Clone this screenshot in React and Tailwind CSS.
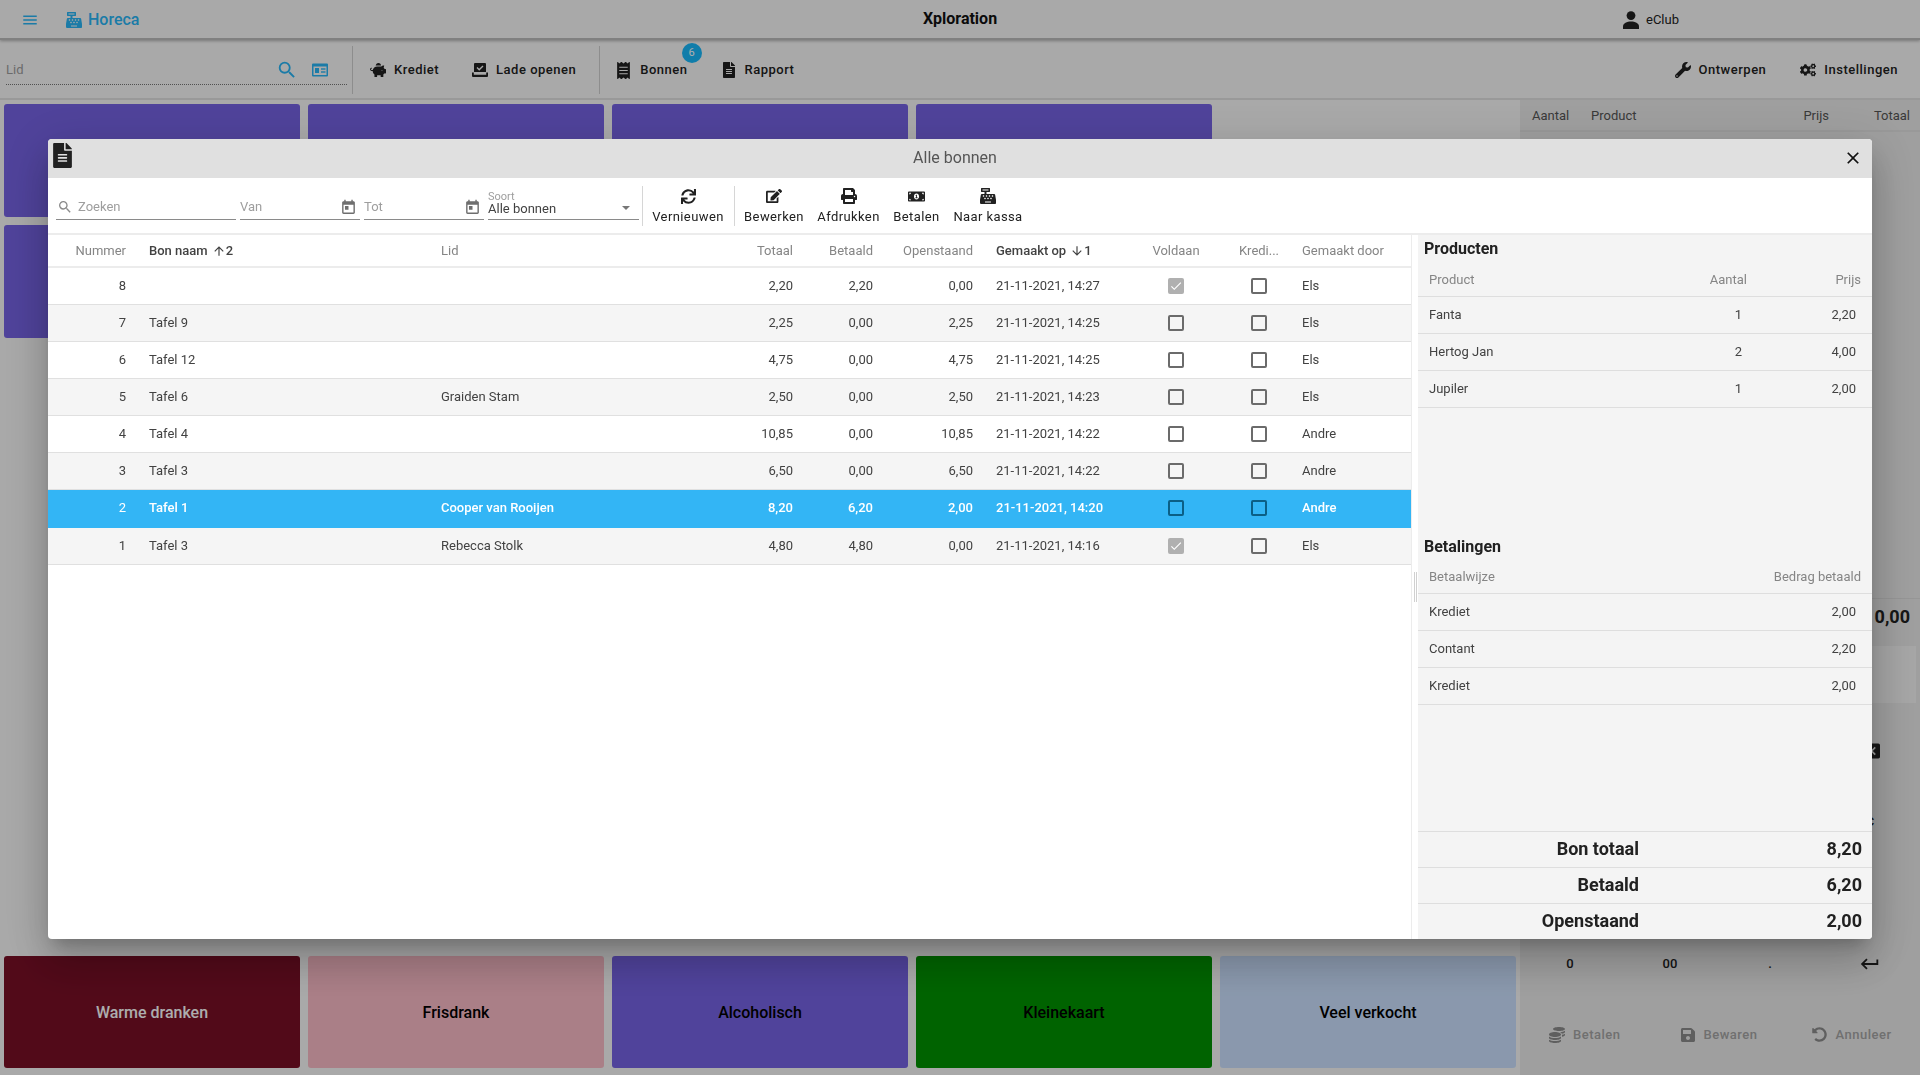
import React from 'react';
import { FaCashRegister, FaPiggyBank, FaFileAlt, FaWrench, FaCogs, FaSync, FaEdit, FaPrint, FaMoneyBillAlt, FaCoins, FaSave, FaUndoAlt, FaReceipt } from 'react-icons/fa';
import { MdMenu, MdSearch, MdToday, MdClose, MdCheck, MdKeyboardReturn, MdArrowUpward, MdArrowDownward, MdBackspace } from 'react-icons/md';

const BONNEN = [
    { nr: 8, naam: '', lid: '', totaal: '2,20', betaald: '2,20', open: '0,00', op: '21-11-2021, 14:27', voldaan: true, door: 'Els' },
    { nr: 7, naam: 'Tafel 9', lid: '', totaal: '2,25', betaald: '0,00', open: '2,25', op: '21-11-2021, 14:25', door: 'Els' },
    { nr: 6, naam: 'Tafel 12', lid: '', totaal: '4,75', betaald: '0,00', open: '4,75', op: '21-11-2021, 14:25', door: 'Els' },
    { nr: 5, naam: 'Tafel 6', lid: 'Graiden Stam', totaal: '2,50', betaald: '0,00', open: '2,50', op: '21-11-2021, 14:23', door: 'Els' },
    { nr: 4, naam: 'Tafel 4', lid: '', totaal: '10,85', betaald: '0,00', open: '10,85', op: '21-11-2021, 14:22', door: 'Andre' },
    { nr: 3, naam: 'Tafel 3', lid: '', totaal: '6,50', betaald: '0,00', open: '6,50', op: '21-11-2021, 14:22', door: 'Andre' },
    { nr: 2, naam: 'Tafel 1', lid: 'Cooper van Rooijen', totaal: '8,20', betaald: '6,20', open: '2,00', op: '21-11-2021, 14:20', door: 'Andre', selected: true },
    { nr: 1, naam: 'Tafel 3', lid: 'Rebecca Stolk', totaal: '4,80', betaald: '4,80', open: '0,00', op: '21-11-2021, 14:16', voldaan: true, door: 'Els' },
];

const PRODUCTEN = [
    { naam: 'Fanta', aantal: 1, prijs: '2,20' },
    { naam: 'Hertog Jan', aantal: 2, prijs: '4,00' },
    { naam: 'Jupiler', aantal: 1, prijs: '2,00' },
];

const BETALINGEN = [
    { wijze: 'Krediet', bedrag: '2,00' },
    { wijze: 'Contant', bedrag: '2,20' },
    { wijze: 'Krediet', bedrag: '2,00' },
];

const GRID_COLS = 'grid grid-cols-[93px_292px_302px_66px_80px_100px_147px_96px_70px_117px] items-center';

// Drawer with a check mark on a tray
const LadeIcon = ({ size = 16 }) => (
    <svg width={size} height={size} viewBox="0 0 16 16" fill="currentColor">
        <path d="M3 1h10a1 1 0 0 1 1 1v8H2V2a1 1 0 0 1 1-1z" />
        <path d="M5 5.6l2.2 2.1L11 4" fill="none" stroke="#fafafa" strokeWidth="1.4" />
        <path d="M0 10.5h1.8v2.3h12.4v-2.3H16V14a1 1 0 0 1-1 1H1a1 1 0 0 1-1-1z" />
    </svg>
);

const LidKaartIcon = ({ size = 16 }) => (
    <svg width={size} height={size} viewBox="0 0 16 16" fill="currentColor">
        <path fillRule="evenodd" d="M1 1.5h14a1 1 0 0 1 1 1v11a1 1 0 0 1-1 1H1a1 1 0 0 1-1-1v-11a1 1 0 0 1 1-1zM1.5 4.5v8.5h13V4.5z" />
        <rect x="3" y="6" width="4" height="5" />
        <rect x="9" y="6.3" width="4.5" height="1.4" />
        <rect x="9" y="9.3" width="4.5" height="1.4" />
    </svg>
);

const PersoonIcon = () => (
    <svg width="16" height="18" viewBox="0 0 16 18" fill="currentColor">
        <circle cx="8" cy="4.6" r="4.4" />
        <path d="M0 18v-2.6C0 12 4 10.4 8 10.4s8 1.6 8 5V18z" />
    </svg>
);

const ToolButton = ({ icon: Icon, size = 16, children }) => (
    <button className="flex items-center gap-2 text-[13px] font-medium tracking-[0.5px] text-[#212121]">
        <Icon size={size} />
        {children}
    </button>
);

const DialogAction = ({ icon: Icon, size = 16, className, children }) => (
    <button className={`flex flex-col items-center text-[13px] text-[#212121] tracking-[0.4px] ${className}`}>
        <span className="h-[20px] flex items-center justify-center"><Icon size={size} /></span>
        <span className="mt-[3px] leading-[16px]">{children}</span>
    </button>
);

const Checkbox = ({ checked, selected }) => (
    checked ? (
        <div className="w-4 h-4 rounded-[2px] bg-[#b0b0b0] flex items-center justify-center text-white"><MdCheck size={14} /></div>
    ) : (
        <div className={`w-4 h-4 rounded-[2px] border-2 ${selected ? 'border-[#0b5f86]' : 'border-[#6b6b6b]'}`} />
    )
);

const Field = ({ placeholder, icon: Icon, className }) => (
    <div className={`h-[25px] border-b border-[#8a8a8a] flex items-center justify-between pr-[3px] text-[13px] text-[#9e9e9e] ${className}`}>
        <span>{placeholder}</span>
        {Icon && <Icon size={17} className="text-[#6e6e6e]" />}
    </div>
);

const BonnenDialog = () => (
    <div className="fixed left-[48px] top-[139px] w-[1824px] h-[800px] rounded-[4px] overflow-hidden bg-white flex flex-col shadow-[0_11px_15px_-7px_rgba(0,0,0,0.2),0_24px_38px_3px_rgba(0,0,0,0.14),0_9px_46px_8px_rgba(0,0,0,0.12)]">
        {/* Title bar */}
        <div className="h-[39px] shrink-0 bg-[#e0e0e0] flex items-center pl-[2px] pb-[1px]">
            <FaFileAlt size={25} className="text-[#212121] mb-[5px]" />
            <span className="flex-1 text-center text-[16px] text-[#555] pr-[8px]">Alle bonnen</span>
            <MdClose size={20} className="text-[#111] mr-[9px]" />
        </div>

        {/* Toolbar */}
        <div className="h-[57px] shrink-0 border-b-2 border-[#ececec] flex items-center pl-[8px]">
            <div className="flex gap-[4px] self-start mt-[17px]">
                <div className="w-[180px] h-[25px] border-b border-[#8a8a8a] flex items-center gap-[5px] text-[13px] text-[#9e9e9e] pl-[1px]">
                    <MdSearch size={16} className="text-[#8a8a8a]" />
                    <span>Zoeken</span>
                </div>
                <Field placeholder="Van" icon={MdToday} className="w-[120px]" />
                <Field placeholder="Tot" icon={MdToday} className="w-[120px]" />
                <div className="w-[151px] h-[25px] border-b border-[#8a8a8a] flex items-end justify-between pr-[9px]">
                    <div className="flex flex-col text-[13px] leading-[14px] text-[#424242] pb-[3px]">
                        <span className="text-[11px] leading-[10px] text-[#9e9e9e]">Soort</span>
                        Alle bonnen
                    </div>
                    <span className="mb-[9px] border-x-[4px] border-t-[4px] border-x-transparent border-t-[#777]" />
                </div>
            </div>
            <div className="w-px h-[40px] bg-[#d6d6d6] ml-[3px]" />
            <DialogAction icon={FaSync} size={15} className="ml-[8px] w-[74px]">Vernieuwen</DialogAction>
            <div className="w-px h-[40px] bg-[#d6d6d6] ml-[9px]" />
            <DialogAction icon={FaEdit} size={16} className="ml-[8px] w-[62px]">Bewerken</DialogAction>
            <DialogAction icon={FaPrint} size={16} className="ml-[11px] w-[65px]">Afdrukken</DialogAction>
            <DialogAction icon={FaMoneyBillAlt} size={17} className="ml-[12px] w-[47px]">Betalen</DialogAction>
            <DialogAction icon={FaCashRegister} size={16} className="ml-[13px] w-[70px]">Naar kassa</DialogAction>
        </div>

        <div className="flex-1 flex min-h-0">
            {/* Table */}
            <div className="w-[1363px] shrink-0 text-[13px] text-[#424242]">
                <div className={`${GRID_COLS} h-[33px] border-b-2 border-[#ececec] text-[#858585]`}>
                    <div className="text-right pr-[15px]">Nummer</div>
                    <div className="pl-2 font-medium text-[#424242] flex items-center gap-[4px]">Bon naam <span className="flex items-center"><MdArrowUpward size={14} />2</span></div>
                    <div className="pl-2">Lid</div>
                    <div className="text-right pr-2">Totaal</div>
                    <div className="text-right pr-2">Betaald</div>
                    <div className="text-right pr-2">Openstaand</div>
                    <div className="pl-[15px] font-medium text-[#424242] flex items-center gap-[4px]">Gemaakt op <span className="flex items-center"><MdArrowDownward size={14} />1</span></div>
                    <div className="text-center">Voldaan</div>
                    <div className="text-center">Kredi...</div>
                    <div className="pl-2">Gemaakt door</div>
                </div>
                {BONNEN.map((bon, index) => (
                    <div
                        key={bon.nr}
                        className={`${GRID_COLS} ${bon.selected ? 'h-[38px] pb-[2px] bg-[#33b5f5] text-white font-medium' : 'h-[37px] border-b border-[#e0e0e0]'} ${!bon.selected && index % 2 === 1 ? 'bg-[#f5f5f5]' : ''}`}
                    >
                        <div className={`text-right pr-[15px] ${bon.selected ? 'font-normal' : ''}`}>{bon.nr}</div>
                        <div className="pl-2">{bon.naam}</div>
                        <div className="pl-2">{bon.lid}</div>
                        <div className="text-right pr-2">{bon.totaal}</div>
                        <div className="text-right pr-2">{bon.betaald}</div>
                        <div className="text-right pr-2">{bon.open}</div>
                        <div className="pl-[15px]">{bon.op}</div>
                        <div className="flex justify-center"><Checkbox checked={bon.voldaan} selected={bon.selected} /></div>
                        <div className="flex justify-center"><Checkbox selected={bon.selected} /></div>
                        <div className="pl-2">{bon.door}</div>
                    </div>
                ))}
            </div>

            {/* Splitter */}
            <div className="w-[7px] shrink-0 border-l border-[#ececec] flex items-center justify-center gap-px">
                <div className="w-px h-[30px] bg-[#d0d0d0]" />
                <div className="w-px h-[30px] bg-[#d0d0d0]" />
            </div>

            {/* Detail panel */}
            <div className="flex-1 bg-[#f4f4f4] flex flex-col text-[13px] text-[#424242]">
                <div className="flex-1">
                    <h2 className="h-[29px] pb-[2px] pl-[6px] text-[16px] font-bold text-[#212121] flex items-center">Producten</h2>
                    <div className="h-[33px] border-b border-[#dedede] grid grid-cols-[1fr_100px_114px] items-center pl-[11px] pr-[11px] text-[#858585]">
                        <div>Product</div>
                        <div className="text-right">Aantal</div>
                        <div className="text-right">Prijs</div>
                    </div>
                    {PRODUCTEN.map(p => (
                        <div key={p.naam} className="h-[37px] border-b border-[#dedede] grid grid-cols-[1fr_100px_114px] items-center pl-[11px] pr-[16px]">
                            <div>{p.naam}</div>
                            <div className="text-right">{p.aantal}</div>
                            <div className="text-right">{p.prijs}</div>
                        </div>
                    ))}
                </div>
                <div className="flex-1">
                    <h2 className="h-[28px] pb-[1px] pl-[6px] text-[16px] font-bold text-[#212121] flex items-center">Betalingen</h2>
                    <div className="h-[33px] border-b border-[#dedede] flex justify-between items-center pl-[11px] pr-[11px] text-[#858585]">
                        <div>Betaalwijze</div>
                        <div>Bedrag betaald</div>
                    </div>
                    {BETALINGEN.map((b, index) => (
                        <div key={index} className="h-[37px] border-b border-[#dedede] flex justify-between items-center pl-[11px] pr-[16px]">
                            <div>{b.wijze}</div>
                            <div>{b.bedrag}</div>
                        </div>
                    ))}
                </div>
                <div className="shrink-0 text-[18px] font-bold text-[#212121]">
                    {[['Bon totaal', '8,20'], ['Betaald', '6,20'], ['Openstaand', '2,00']].map(([label, value]) => (
                        <div key={label} className="h-[36px] border-t border-[#dedede] grid grid-cols-[221px_1fr] items-center pr-[10px] pb-[2px]">
                            <div className="text-right">{label}</div>
                            <div className="text-right">{value}</div>
                        </div>
                    ))}
                </div>
            </div>
        </div>
    </div>
);

const App = () => {
    return (
        <div className="w-[1920px] h-[1075px] overflow-hidden bg-[#fafafa] flex flex-col [font-family:Roboto,sans-serif]">
            {/* Top bar */}
            <header className="h-[40px] shrink-0 border-b-2 border-[#bdbdbd] shadow-[0_1px_3px_rgba(0,0,0,0.3)] grid grid-cols-[1fr_auto_1fr] items-center pt-[2px]">
                <div className="flex items-center text-[#29b6f6]">
                    <MdMenu size={18} className="ml-[21px]" />
                    <FaCashRegister size={16} className="ml-[27px]" />
                    <span className="ml-[6px] text-[16px] font-medium">Horeca</span>
                </div>
                <div className="text-[16px] font-bold text-[#111] -mt-[2px]">Xploration</div>
                <div className="flex items-center justify-end gap-[7px] pr-[241px] text-[13px] text-[#212121]">
                    <PersoonIcon />
                    eClub
                </div>
            </header>

            {/* Main toolbar */}
            <div className="h-[60px] shrink-0 border-b-2 border-[#e2e2e2] flex items-center pt-[2px]">
                <div className="w-[341px] ml-[6px] h-[30px] border-b border-dotted border-[#777] flex items-center">
                    <span className="flex-1 text-[13px] text-[#9e9e9e]">Lid</span>
                    <MdSearch size={22} className="text-[#29b6f6]" />
                    <span className="text-[#29b6f6] ml-[14px] mr-[19px]"><LidKaartIcon /></span>
                </div>
                <div className="w-px h-[48px] bg-[#d0d0d0] ml-[5px]" />
                <div className="ml-[17px]"><ToolButton icon={FaPiggyBank} size={16}>Krediet</ToolButton></div>
                <div className="ml-[33px]"><ToolButton icon={LadeIcon} size={16}>Lade openen</ToolButton></div>
                <div className="w-px h-[48px] bg-[#d0d0d0] ml-[23px]" />
                <div className="ml-[15px] relative">
                    <ToolButton icon={FaReceipt} size={17}>Bonnen</ToolButton>
                    <span className="absolute -top-[17px] right-[-14px] w-5 h-5 rounded-full bg-[#19b9fb] text-white text-[11px] flex items-center justify-center">6</span>
                </div>
                <div className="ml-[33px]"><ToolButton icon={FaFileAlt} size={16}>Rapport</ToolButton></div>
                <div className="ml-auto mr-[22px] flex items-center gap-[34px]">
                    <ToolButton icon={FaWrench} size={16}>Ontwerpen</ToolButton>
                    <ToolButton icon={FaCogs} size={16}>Instellingen</ToolButton>
                </div>
            </div>

            <div className="flex-1 flex min-h-0">
                {/* Product area */}
                <div className="w-[1520px] shrink-0 flex flex-col justify-between px-1 pt-[4px] pb-[7px]">
                    <div className="grid grid-cols-5 gap-x-2 gap-y-2 auto-rows-[113px]">
                        {[0, 1, 2, 3].map(i => <div key={i} className="rounded-[3px] bg-[#7663e5]" />)}
                        <div />
                        {[0, 1, 2, 3].map(i => <div key={i} className="rounded-[3px] bg-[#7663e5]" />)}
                    </div>
                    <div className="grid grid-cols-5 gap-x-2 h-[112px] text-[16px] font-medium text-black">
                        <div className="rounded-[3px] bg-[#790f26] text-white flex items-center justify-center pt-[2px]">Warme dranken</div>
                        <div className="rounded-[3px] bg-[#fbbbc7] flex items-center justify-center pt-[2px]">Frisdrank</div>
                        <div className="rounded-[3px] bg-[#7663e5] flex items-center justify-center pt-[2px]">Alcoholisch</div>
                        <div className="rounded-[3px] bg-[#009300] flex items-center justify-center pt-[2px]">Kleinekaart</div>
                        <div className="rounded-[3px] bg-[#cce1ff] flex items-center justify-center pt-[2px]">Veel verkocht</div>
                    </div>
                </div>

                {/* Register panel */}
                <div className="flex-1 bg-[#ebebeb] flex flex-col">
                    <div className="h-[28px] mt-[4px] shrink-0 border-b-2 border-[#e2e2e2] grid grid-cols-[59px_1fr_60px_81px] items-center pl-[12px] pr-[10px] pb-[2px] text-[13px] text-[#555]">
                        <div>Aantal</div>
                        <div>Product</div>
                        <div className="text-right">Prijs</div>
                        <div className="text-right">Totaal</div>
                    </div>
                    <div className="h-[466px] shrink-0" />
                    <div className="h-[48px] shrink-0 border-t border-[#ddd] flex items-center justify-end pr-[10px] pb-[12px] text-[18px] font-bold text-[#212121]">0,00</div>
                    <div className="h-[57px] shrink-0 mr-[4px] bg-[#f5f5f5]" />
                    <div className="flex-1 grid grid-cols-4 auto-rows-[71px] pt-[12px] text-[13px] font-medium text-[#212121] text-center items-center">
                        <div>7</div><div>8</div><div>9</div><div className="flex justify-center"><MdBackspace size={20} /></div>
                        <div>4</div><div>5</div><div>6</div><div>C</div>
                        <div>1</div><div>2</div><div>3</div><div />
                        <div>0</div><div>00</div><div>.</div><div className="flex justify-center"><MdKeyboardReturn size={22} /></div>
                    </div>
                    <div className="h-[65px] shrink-0 flex items-center pl-[29px] pb-[16px] text-[13px] font-medium tracking-[0.5px] text-[#a5a5a5]">
                        <span className="flex items-center gap-2"><FaCoins size={16} className="text-[#8c8c8c]" />Betalen</span>
                        <span className="flex items-center gap-2 ml-[59px]"><FaSave size={16} className="text-[#8c8c8c]" />Bewaren</span>
                        <span className="flex items-center gap-[9px] ml-[54px]"><FaUndoAlt size={15} className="text-[#8c8c8c]" />Annuleer</span>
                    </div>
                </div>
            </div>

            {/* Backdrop */}
            <div className="fixed inset-0 bg-black/32" />
            <BonnenDialog />
        </div>
    );
};

export default App;
